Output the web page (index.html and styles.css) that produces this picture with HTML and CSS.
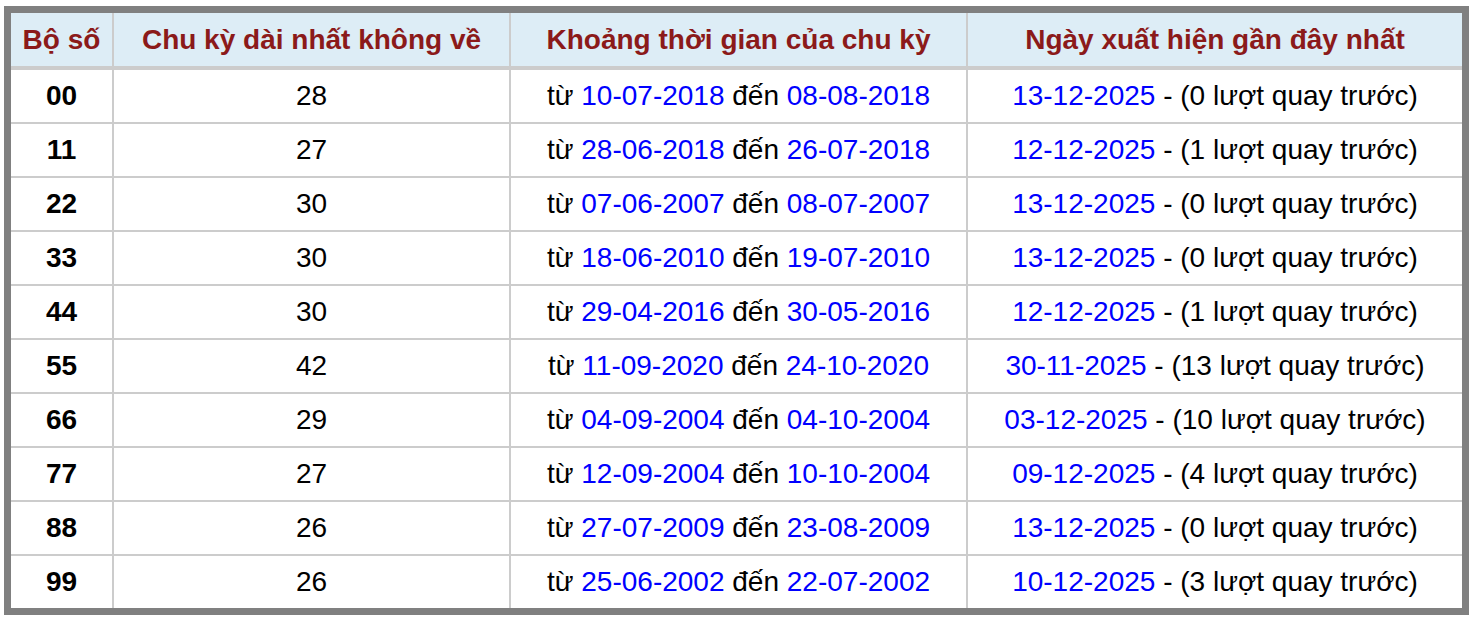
FILE: index.html
```html
<!DOCTYPE html>
<html lang="vi">
<head>
<meta charset="utf-8">
<title>Chu kỳ dài nhất không về</title>
<link rel="stylesheet" href="styles.css">
</head>
<body>
<table class="stats">
  <colgroup>
    <col class="c1"><col class="c2"><col class="c3"><col class="c4">
  </colgroup>
  <thead>
    <tr>
      <th>Bộ số</th>
      <th>Chu kỳ dài nhất không về</th>
      <th>Khoảng thời gian của chu kỳ</th>
      <th>Ngày xuất hiện gần đây nhất</th>
    </tr>
  </thead>
  <tbody>
    <tr><td class="num">00</td><td>28</td><td>từ <span class="d">10-07-2018</span> đến <span class="d">08-08-2018</span></td><td><span class="d">13-12-2025</span> - (0 lượt quay trước)</td></tr>
    <tr><td class="num">11</td><td>27</td><td>từ <span class="d">28-06-2018</span> đến <span class="d">26-07-2018</span></td><td><span class="d">12-12-2025</span> - (1 lượt quay trước)</td></tr>
    <tr><td class="num">22</td><td>30</td><td>từ <span class="d">07-06-2007</span> đến <span class="d">08-07-2007</span></td><td><span class="d">13-12-2025</span> - (0 lượt quay trước)</td></tr>
    <tr><td class="num">33</td><td>30</td><td>từ <span class="d">18-06-2010</span> đến <span class="d">19-07-2010</span></td><td><span class="d">13-12-2025</span> - (0 lượt quay trước)</td></tr>
    <tr><td class="num">44</td><td>30</td><td>từ <span class="d">29-04-2016</span> đến <span class="d">30-05-2016</span></td><td><span class="d">12-12-2025</span> - (1 lượt quay trước)</td></tr>
    <tr><td class="num">55</td><td>42</td><td>từ <span class="d">11-09-2020</span> đến <span class="d">24-10-2020</span></td><td><span class="d">30-11-2025</span> - (13 lượt quay trước)</td></tr>
    <tr><td class="num">66</td><td>29</td><td>từ <span class="d">04-09-2004</span> đến <span class="d">04-10-2004</span></td><td><span class="d">03-12-2025</span> - (10 lượt quay trước)</td></tr>
    <tr><td class="num">77</td><td>27</td><td>từ <span class="d">12-09-2004</span> đến <span class="d">10-10-2004</span></td><td><span class="d">09-12-2025</span> - (4 lượt quay trước)</td></tr>
    <tr><td class="num">88</td><td>26</td><td>từ <span class="d">27-07-2009</span> đến <span class="d">23-08-2009</span></td><td><span class="d">13-12-2025</span> - (0 lượt quay trước)</td></tr>
    <tr><td class="num">99</td><td>26</td><td>từ <span class="d">25-06-2002</span> đến <span class="d">22-07-2002</span></td><td><span class="d">10-12-2025</span> - (3 lượt quay trước)</td></tr>
  </tbody>
</table>
</body>
</html>
```
FILE: styles.css
```css
html, body {
  margin: 0;
  padding: 0;
  background: #ffffff;
}
body {
  font-family: "Liberation Sans", Arial, Helvetica, sans-serif;
  font-size: 28px;
  color: #000;
}
.stats {
  margin: 6px 0 0 4px;
  width: 1465px;
  border: 7px solid #808080;
  border-collapse: separate;
  border-spacing: 0;
  table-layout: fixed;
  box-sizing: border-box;
}
.c1 { width: 103px; }
.c2 { width: 397px; }
.c3 { width: 457px; }
.c4 { width: 494px; }
.stats th,
.stats td {
  padding: 0;
  text-align: center;
  vertical-align: middle;
  white-space: nowrap;
  border-right: 2px solid #cccccc;
  border-bottom: 2px solid #cccccc;
  line-height: 30px;
}
.stats th:last-child,
.stats td:last-child {
  border-right: 0;
}
.stats tbody tr:last-child td {
  border-bottom: 0;
}
.stats th {
  height: 53px;
  background: #ddedf6;
  color: #8b1a1a;
  font-weight: bold;
  border-bottom: 4px solid #cccccc;
}
.stats td {
  height: 52px;
}
.stats td.num {
  font-weight: bold;
}
.d {
  color: #0000ff;
}
```
